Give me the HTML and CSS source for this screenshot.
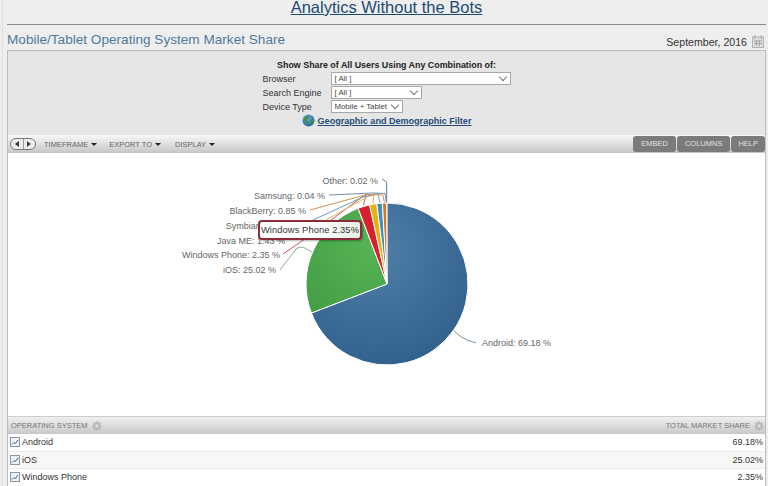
FILE: index.html
```html
<!DOCTYPE html>
<html lang="en">
<head>
<meta charset="utf-8">
<title>Analytics Without the Bots</title>
<link rel="stylesheet" href="styles.css">
</head>
<body>
<div class="page">
  <h1 class="site-title"><a href="#">Analytics Without the Bots</a></h1>
  <div class="title-row">
    <h2 class="report-title">Mobile/Tablet Operating System Market Share</h2>
    <div class="report-date">September, 2016
      <svg class="cal" viewBox="0 0 12 13" width="12" height="13"><rect x="0.5" y="2" width="11" height="10.500" fill="#dcdcdc" stroke="#b4b4b4"/><rect x="2" y="0.5" width="1.500" height="3" fill="#aaa"/><rect x="8.500" y="0.5" width="1.500" height="3" fill="#aaa"/><path d="M2 6h8M2 8.500h8M4.500 5v6M7.500 5v6" stroke="#a8a8a8" fill="none"/></svg>
    </div>
  </div>
  <section class="panel">
    <form class="filters">
      <div class="filters-head">Show Share of All Users Using Any Combination of:</div>
      <div class="filter-grid">
        <label>Browser</label><div class="sel w179">[ All ]</div>
        <label>Search Engine</label><div class="sel w90">[ All ]</div>
        <label>Device Type</label><div class="sel w71">Mobile + Tablet</div>
      </div>
      <div class="geo">
        <svg viewBox="0 0 14 14" width="13" height="13"><defs><radialGradient id="globe" cx=".4" cy=".3" r=".8"><stop offset="0" stop-color="#6fb0dc"/><stop offset="1" stop-color="#1d5a90"/></radialGradient></defs><circle cx="7" cy="7" r="6.500" fill="url(#globe)"/><path d="M3 3l3-1 2 1-1 2-2 1 1 2 2 1-1 3-2-2-1-2-2-1zM9 6l3 0 1 3-2 2z" fill="#3f8f4a"/></svg>
        <a href="#">Geographic and Demographic Filter</a>
      </div>
    </form>
    <div class="toolbar">
      <div class="pager">
        <span class="pager-btn"><i class="tri-l"></i></span><span class="pager-btn"><i class="tri-r"></i></span>
      </div>
      <span class="menu">TIMEFRAME<i class="caret"></i></span>
      <span class="menu export">EXPORT TO<i class="caret"></i></span>
      <span class="menu">DISPLAY<i class="caret"></i></span>
      <div class="tool-btns">
        <span class="tool-btn wide">EMBED</span><span class="tool-btn wide">COLUMNS</span><span class="tool-btn">HELP</span>
      </div>
    </div>
    <div class="chart">
      <svg class="pie" viewBox="8 153 756 263" width="756" height="263">
        <defs>
          <radialGradient id="gb" gradientUnits="userSpaceOnUse" cx="375" cy="252" r="122"><stop offset="0" stop-color="#5080a8"/><stop offset="1" stop-color="#2f5f8b"/></radialGradient>
          <radialGradient id="gg" gradientUnits="userSpaceOnUse" cx="372" cy="248" r="100"><stop offset="0" stop-color="#55b455"/><stop offset="1" stop-color="#429a42"/></radialGradient>
        </defs>
        <g class="leaders">
          <path d="M453 330Q460 337 467 340L476 343" stroke="#7f93a6"/>
          <path d="M280 270L297 248L303 247L312 252" stroke="#8fb08f"/>
          <path d="M283 254L315 232L362 197L366 195L363.500 205" stroke="#d0505a"/>
          <path d="M326 220L367 197L374 195L373 204" stroke="#e0b860"/>
          <path d="M313 220L363 197L378 193.500L380 203" stroke="#6f9fc0"/>
          <path d="M310 210L367 194.500L383 195L384.500 203" stroke="#d89050"/>
          <path d="M329 195L373 193L385 193.500L386.500 203" stroke="#6a8fb0"/>
          <path d="M382 179L386.700 182L386.700 203" stroke="#5f82a5"/>
        </g>
        <g class="slices">
          <path d="M387 284L387 203A81 81 0 1 1 311.400 313Z" fill="url(#gb)"/>
          <path d="M387 284L311.400 313A81 81 0 0 1 358.100 208.300Z" fill="url(#gg)"/>
          <path d="M387 284L358.100 208.300A81 81 0 0 1 369.600 204.900Z" fill="#d8202f"/>
          <path d="M387 284L369.600 204.900A81 81 0 0 1 376.750 203.650Z" fill="#e8b010"/>
          <path d="M387 284L376.750 203.650A81 81 0 0 1 382.370 203.130Z" fill="#3f8fc4"/>
          <path d="M387 284L382.370 203.130A81 81 0 0 1 386.700 203Z" fill="#d9771a"/>
        </g>
        <g class="labels">
          <text x="378" y="184" text-anchor="end">Other: 0.02 %</text>
          <text x="325" y="199" text-anchor="end">Samsung: 0.04 %</text>
          <text x="306" y="214" text-anchor="end">BlackBerry: 0.85 %</text>
          <text x="293" y="229" text-anchor="end">Symbian: 1.11 %</text>
          <text x="285" y="243.500" text-anchor="end">Java ME: 1.43 %</text>
          <text x="280" y="258" text-anchor="end">Windows Phone: 2.35 %</text>
          <text x="276" y="273" text-anchor="end">iOS: 25.02 %</text>
          <text x="482" y="346">Android: 69.18 %</text>
        </g>
      </svg>
      <div class="tooltip">Windows Phone 2.35%</div>
    </div>
    <div class="table-head">
      <span class="th">OPERATING SYSTEM
        <svg class="gear" viewBox="0 0 10 10" width="10" height="10"><circle cx="5" cy="5" r="2.800" fill="none" stroke="#b8b8b8" stroke-width="2"/><path d="M5 0v2M5 8v2M0 5h2M8 5h2M1.500 1.500l1.400 1.400M7.100 7.100l1.400 1.400M1.500 8.500l1.400-1.400M7.100 2.900l1.400-1.400" stroke="#b8b8b8" stroke-width="1.200"/></svg>
      </span>
      <span class="th">TOTAL MARKET SHARE
        <svg class="gear" viewBox="0 0 10 10" width="10" height="10"><circle cx="5" cy="5" r="2.800" fill="none" stroke="#b8b8b8" stroke-width="2"/><path d="M5 0v2M5 8v2M0 5h2M8 5h2M1.500 1.500l1.400 1.400M7.100 7.100l1.400 1.400M1.500 8.500l1.400-1.400M7.100 2.900l1.400-1.400" stroke="#b8b8b8" stroke-width="1.200"/></svg>
      </span>
    </div>
    <div class="row"><span class="name"><svg class="chk" viewBox="0 0 10 10" width="10" height="10"><rect x="0.5" y="0.5" width="9" height="9" fill="#eef2f7" stroke="#8397ad"/><path d="M2 7.500L4 5.500L5.500 6.500L8 3" fill="none" stroke="#4a6285"/></svg>Android</span><span>69.18%</span></div>
    <div class="row alt"><span class="name"><svg class="chk" viewBox="0 0 10 10" width="10" height="10"><rect x="0.5" y="0.5" width="9" height="9" fill="#eef2f7" stroke="#8397ad"/><path d="M2 7.500L4 5.500L5.500 6.500L8 3" fill="none" stroke="#4a6285"/></svg>iOS</span><span>25.02%</span></div>
    <div class="row"><span class="name"><svg class="chk" viewBox="0 0 10 10" width="10" height="10"><rect x="0.5" y="0.5" width="9" height="9" fill="#eef2f7" stroke="#8397ad"/><path d="M2 7.500L4 5.500L5.500 6.500L8 3" fill="none" stroke="#4a6285"/></svg>Windows Phone</span><span>2.35%</span></div>
  </section>
</div>
</body>
</html>
```
FILE: styles.css
```css
html, body { margin: 0; padding: 0; }
body { width: 768px; height: 486px; overflow: hidden; background: #eeeeee; font-family: "Liberation Sans", Arial, sans-serif; color: #444; }
.page { height: 486px; margin-left: 2px; border-left: 1px solid #dedede; padding: 0 2px 0 4px; box-sizing: border-box; overflow: hidden; }
.site-title { margin: 0; height: 24px; border-bottom: 1px solid #8a8a8a; text-align: center; font-size: 16.500px; font-weight: 400; line-height: 14px; }
.site-title a { color: #1d4a73; }
.title-row { display: flex; justify-content: space-between; align-items: flex-end; height: 25px; }
.report-title { margin: 0; font-size: 13.600px; font-weight: 400; color: #507a9b; line-height: 20px; }
.report-date { display: flex; align-items: center; gap: 5px; font-size: 10.600px; color: #333; padding-right: 2px; padding-bottom: 2px; }
.panel { border: 1px solid #bdbdbd; border-bottom: 0; background: #e6e6e6; }
.filters { height: 84px; box-sizing: border-box; padding-top: 9px; display: flex; flex-direction: column; align-items: center; }
.filters-head { font-size: 8.900px; font-weight: 700; color: #222; line-height: 11px; }
.filter-grid { display: grid; grid-template-columns: 68px auto; justify-items: start; align-items: center; row-gap: 1px; margin: 1px 0 0 0; width: 248px; font-size: 9px; color: #333; }
.sel { height: 11px; box-sizing: content-box; border: 1px solid #a8a8a8; background: #fff; font-size: 7.800px; line-height: 11px; padding-left: 3px; position: relative; color: #444; }
.sel::after { content: ""; position: absolute; right: 4px; top: 1px; width: 5px; height: 5px; border-right: 1px solid #777; border-bottom: 1px solid #777; transform: rotate(45deg); }
.w179 { width: 175px; }
.w90 { width: 86px; }
.w71 { width: 67px; }
.geo { display: flex; align-items: center; gap: 3px; margin-top: 1px; font-size: 9.050px; font-weight: 700; }
.geo a { color: #254b78; }
.toolbar { height: 18px; display: flex; align-items: center; background: linear-gradient(#f8f8f8, #c6c6c6); font-size: 7.500px; color: #666; padding-left: 2px; }
.pager { display: flex; width: 24px; height: 10px; border: 1px solid #777; border-radius: 6px; margin-right: 8px; background: #eee; overflow: hidden; }
.pager-btn { flex: 1; display: flex; align-items: center; justify-content: center; }
.pager-btn:first-child { border-right: 1px solid #999; }
.tri-l { border: 3px solid transparent; border-right: 4px solid #333; border-left: 0; }
.tri-r { border: 3px solid transparent; border-left: 4px solid #444; border-right: 0; }
.menu { display: inline-flex; align-items: center; margin-right: 12px; }
.menu.export { margin-right: 14px; }
.caret { margin-left: 3px; border: 3px solid transparent; border-top: 3px solid #222; border-bottom: 0; }
.tool-btns { margin-left: auto; display: flex; gap: 1px; }
.tool-btn { height: 16px; line-height: 16px; padding: 0 7px; background: #7b7b7b; color: #e0e0e0; border-radius: 3px; }
.tool-btn.wide { padding: 0 8px; }
.chart { position: relative; height: 263px; background: #fff; }
.pie { display: block; }
.leaders path { fill: none; stroke-width: 1; }
.slices path { stroke: #fff; stroke-width: 1; }
.labels text { font-family: "Liberation Sans", Arial, sans-serif; font-size: 9px; fill: #666; }
.tooltip { position: absolute; left: 250px; top: 67px; width: 104px; height: 20px; box-sizing: border-box; border: 2px solid #8b2c38; border-radius: 4px; background: linear-gradient(90deg, #fff 60%, #e2efe2); font-size: 9.300px; line-height: 16px; text-align: center; color: #333; white-space: nowrap; box-shadow: 1px 1px 2px rgba(0,0,0,.3); letter-spacing: .1px; }
.table-head { height: 18px; display: flex; justify-content: space-between; align-items: center; padding: 0 1px 0 3px; background: linear-gradient(#f0f0f0, #c8c8c8); border-top: 1px solid #ccc; box-sizing: border-box; font-size: 7.500px; color: #777; }
.th { display: inline-flex; align-items: center; gap: 4px; }
.row { height: 16.500px; display: flex; justify-content: space-between; align-items: center; padding: 0 2px 0 2px; background: #fff; border-bottom: 1px solid #eaeaea; font-size: 9px; color: #333; }
.row.alt { background: #f8f8f8; }
.name { display: inline-flex; align-items: center; gap: 2px; }
.chk { display: block; }
```
